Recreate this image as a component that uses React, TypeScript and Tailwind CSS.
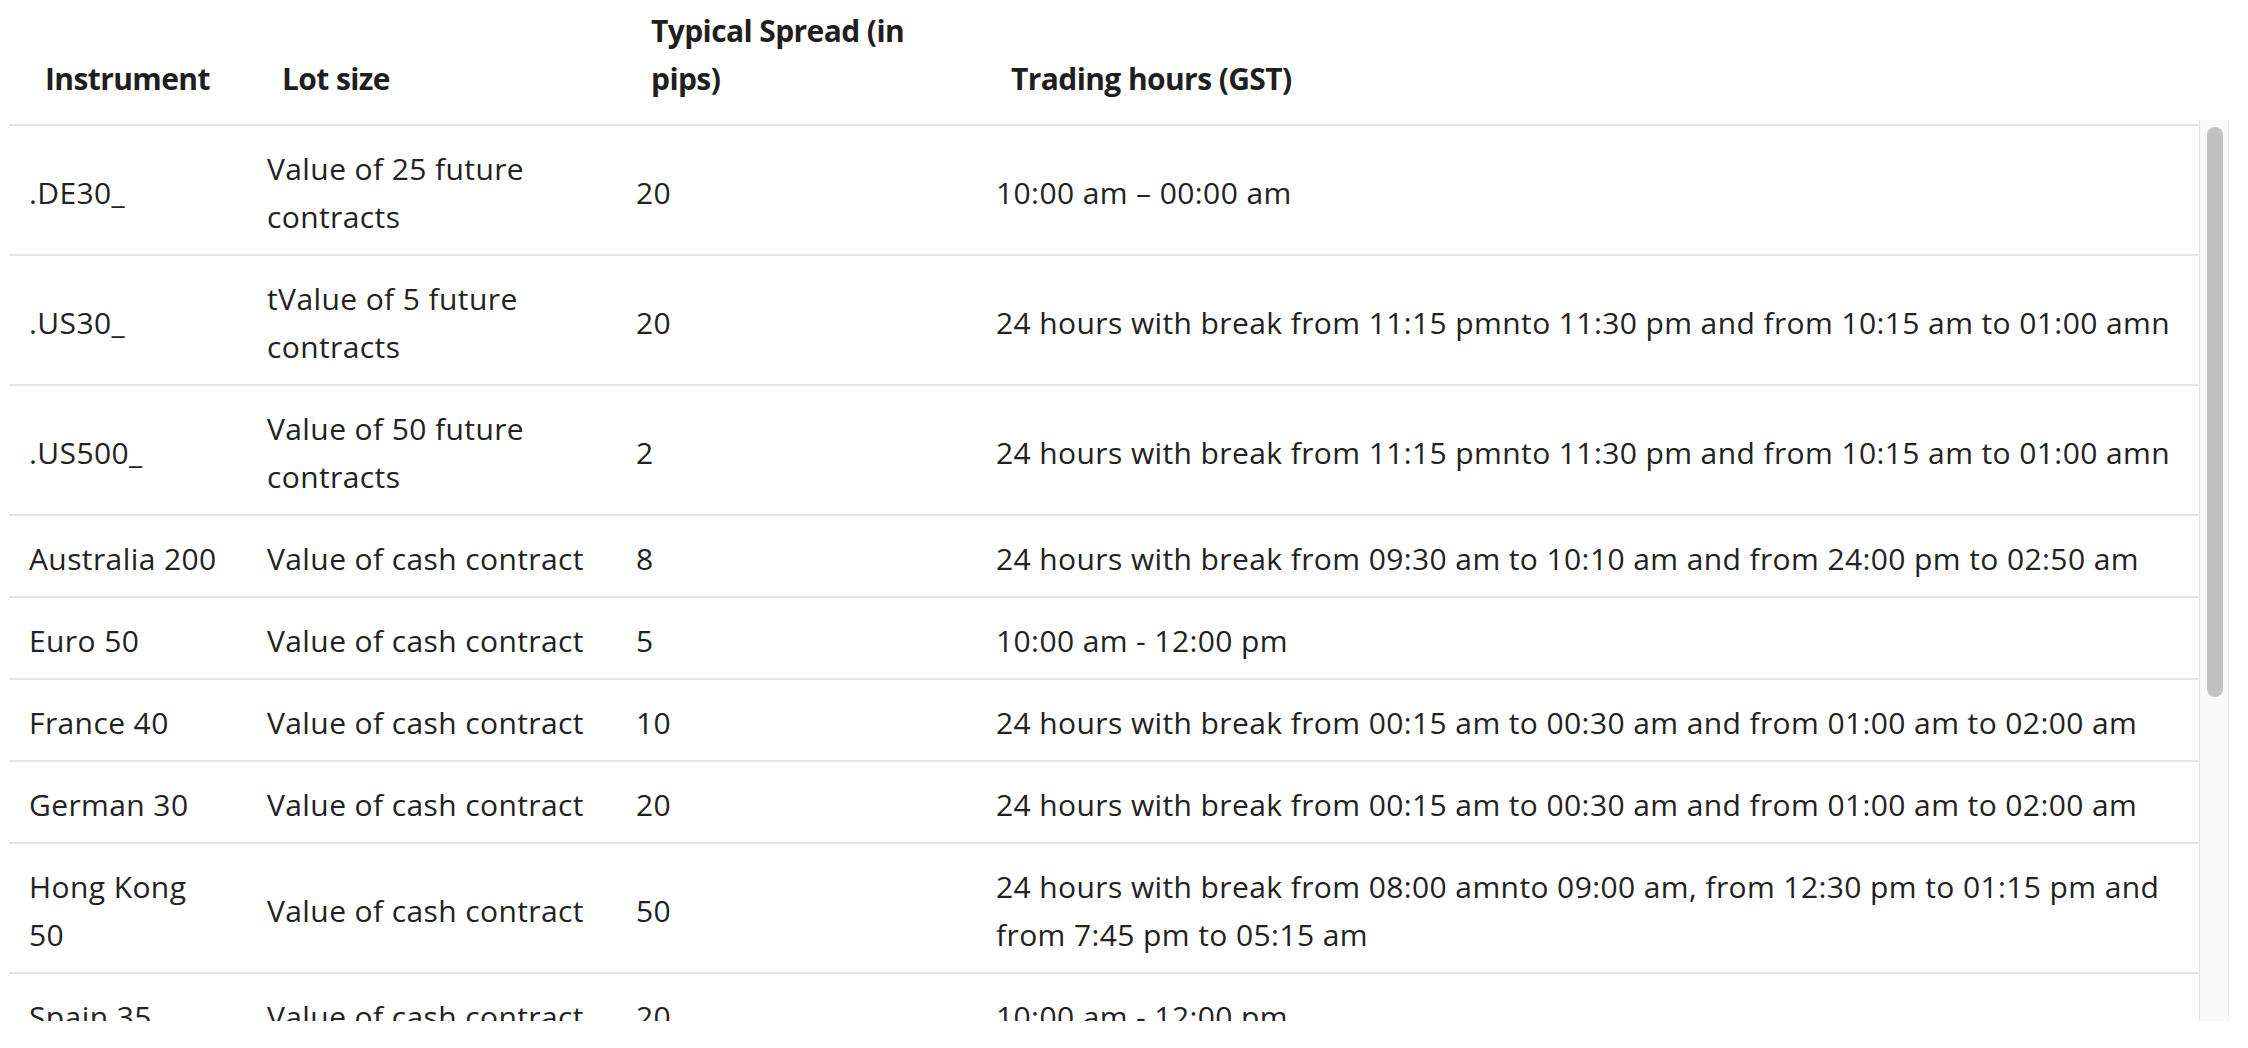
const rows = [
  { name: ".DE30_", lot: "Value of 25 future contracts", spread: "20", hours: "10:00 am – 00:00 am" },
  {
    name: ".US30_",
    lot: "tValue of 5 future contracts",
    spread: "20",
    hours: "24 hours with break from 11:15 pmnto 11:30 pm and from 10:15 am to 01:00 amn",
  },
  {
    name: ".US500_",
    lot: "Value of 50 future contracts",
    spread: "2",
    hours: "24 hours with break from 11:15 pmnto 11:30 pm and from 10:15 am to 01:00 amn",
  },
  {
    name: "Australia 200",
    lot: "Value of cash contract",
    spread: "8",
    hours: "24 hours with break from 09:30 am to 10:10 am and from 24:00 pm to 02:50 am",
  },
  { name: "Euro 50", lot: "Value of cash contract", spread: "5", hours: "10:00 am - 12:00 pm" },
  {
    name: "France 40",
    lot: "Value of cash contract",
    spread: "10",
    hours: "24 hours with break from 00:15 am to 00:30 am and from 01:00 am to 02:00 am",
  },
  {
    name: "German 30",
    lot: "Value of cash contract",
    spread: "20",
    hours: "24 hours with break from 00:15 am to 00:30 am and from 01:00 am to 02:00 am",
  },
  {
    name: "Hong Kong 50",
    lot: "Value of cash contract",
    spread: "50",
    hours: "24 hours with break from 08:00 amnto 09:00 am, from 12:30 pm to 01:15 pm and from 7:45 pm to 05:15 am",
  },
  { name: "Spain 35", lot: "Value of cash contract", spread: "20", hours: "10:00 am - 12:00 pm" },
  { name: "UK 100", lot: "Value of cash contract", spread: "10", hours: "10:00 am - 12:00 am" },
  { name: "US Tech 100", lot: "Value of cash contract", spread: "20", hours: "24 hours with break from 01:15 am to 01:30 am" },
  { name: "Wall Street 30", lot: "Value of cash contract", spread: "30", hours: "24 hours with break from 01:15 am to 01:30 am" },
];

const cols = "grid grid-cols-[237px_369px_360px_1fr]";

export default function App() {
  return (
    <main className="bg-white text-[#222] font-['Open_Sans',sans-serif] text-[30px] leading-[48px] pl-[9px] pr-[19px]">
      {/* Table head */}
      <div className={`${cols} items-end ml-[15px] pt-[7px] pb-[17px] font-bold tracking-[-0.6px] text-[#1f1f1f]`}>
        <div className="pl-[21px] pr-[21px]">Instrument</div>
        <div className="pl-[21px] pr-[21px]">Lot size</div>
        <div className="pl-[21px] pr-[21px]">Typical Spread (in pips)</div>
        <div className="pl-[21px] pr-[21px]">Trading hours (GST)</div>
      </div>

      <div className="flex h-[901px]">
        <div className="flex-1 overflow-hidden pt-[4px]">
          <div className="border-t-2 border-[#e6e6e6] tracking-[0.4px]">
            {rows.map((row, index) => (
              <div key={index} className={`${cols} items-center border-b-2 border-[#e6e6e6] pt-[19px] pb-[13px]`}>
                <div className="pl-[20px] pr-[25px]">{row.name}</div>
                <div className="pl-[21px] pr-[21px]">{row.lot}</div>
                <div className="pl-[21px] pr-[21px]">{row.spread}</div>
                <div className="pl-[21px] pr-[21px]">{row.hours}</div>
              </div>
            ))}
          </div>
        </div>
        <div className="w-[30px] shrink-0 border-x border-l-[#e2e2e2] border-r-[#ececec] bg-[#f9f9f9]">
          <div className="ml-[7px] mt-[7px] h-[570px] w-[16px] rounded-full bg-[#c1c1c1]" />
        </div>
      </div>
    </main>
  );
}
